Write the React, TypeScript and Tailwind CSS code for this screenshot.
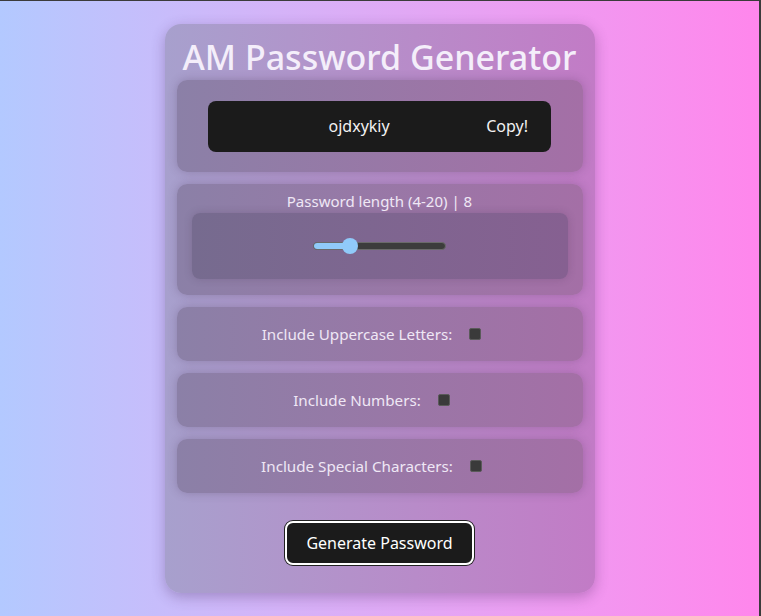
import React from 'react';

const font = { fontFamily: '"Noto Sans", "Open Sans", sans-serif' };

function Option({ label }: { label: string }) {
  return (
    <div className="h-[54px] rounded-[10px] bg-gradient-to-r from-[#8b80a7] to-[#a46fa6] shadow-[0_0_10px_rgba(60,40,70,0.25)] flex items-center justify-center gap-[17px]">
      <span className="text-[15.2px] leading-[22px] text-[#efe7f5]">{label}</span>
      <span className="w-[12px] h-[12px] mr-4 rounded-[2px] bg-[#3a3a3a] border border-[#5a5a5a]" />
    </div>
  );
}

export default function App() {
  const length = 8;
  const pct = (length - 4) / 16;

  return (
    <div
      className="w-full h-[616px] border-t border-r-2 border-[#3b3b3b] bg-gradient-to-r from-[#b3c9ff] to-[#ff86ec] flex justify-center"
      style={font}
    >
      <div className="mt-[23px] w-[430px] h-[569px] rounded-[16px] bg-gradient-to-r from-[#a7a0cd] to-[#c27bc6] shadow-[0_4px_14px_rgba(60,30,80,0.3)] px-[12px] pt-[13px] flex flex-col">
        <h1 className="text-center text-[34px] leading-[40px] font-medium text-[#f4eefa]">
          AM Password Generator
        </h1>

        <div className="mt-[3px] flex flex-col gap-[12px]">
          {/* password output */}
          <div className="h-[92px] rounded-[10px] bg-gradient-to-r from-[#8b80a7] to-[#a46fa6] shadow-[0_0_10px_rgba(60,40,70,0.25)] flex items-center justify-center">
            <div className="w-[343px] h-[51px] rounded-[8px] bg-[#1b1b1b] flex items-center pr-[23px]">
              <span className="flex-1 pl-6 text-center text-[16px] text-[#f2f2f2]">ojdxykiy</span>
              <span className="text-[16px] text-[#f2f2f2]">Copy!</span>
            </div>
          </div>

          {/* length slider */}
          <div className="h-[111px] rounded-[10px] bg-gradient-to-r from-[#8b80a7] to-[#a46fa6] shadow-[0_0_10px_rgba(60,40,70,0.25)] px-[15px] pt-[6px]">
            <div className="text-center text-[15px] leading-[22px] text-[#efe7f5]">
              Password length (4-20) | {length}
            </div>
            <div className="mt-[1px] h-[66px] rounded-[8px] bg-gradient-to-r from-[#766b8f] to-[#866091] shadow-[0_0_8px_rgba(60,40,70,0.2)] flex items-center justify-center">
              <div className="relative w-[133px] h-[16px] flex items-center">
                <div className="w-full h-[8px] rounded-full bg-[#3c3c3c] border border-[#6a6a6a] overflow-hidden">
                  <div className="h-full bg-[#90caf9]" style={{ width: `${8 + pct * 117}px` }} />
                </div>
                <div
                  className="absolute top-0 w-[16px] h-[16px] rounded-full bg-[#90caf9]"
                  style={{ left: `${pct * 117}px` }}
                />
              </div>
            </div>
          </div>

          <Option label="Include Uppercase Letters:" />
          <Option label="Include Numbers:" />
          <Option label="Include Special Characters:" />
        </div>

        <div className="mt-[28px] flex justify-center">
          <button className="w-[189px] h-[44px] rounded-[8px] bg-[#1b1b1b] border-2 border-white ring-1 ring-[#222] text-[16px] text-white">
            Generate Password
          </button>
        </div>
      </div>
    </div>
  );
}
